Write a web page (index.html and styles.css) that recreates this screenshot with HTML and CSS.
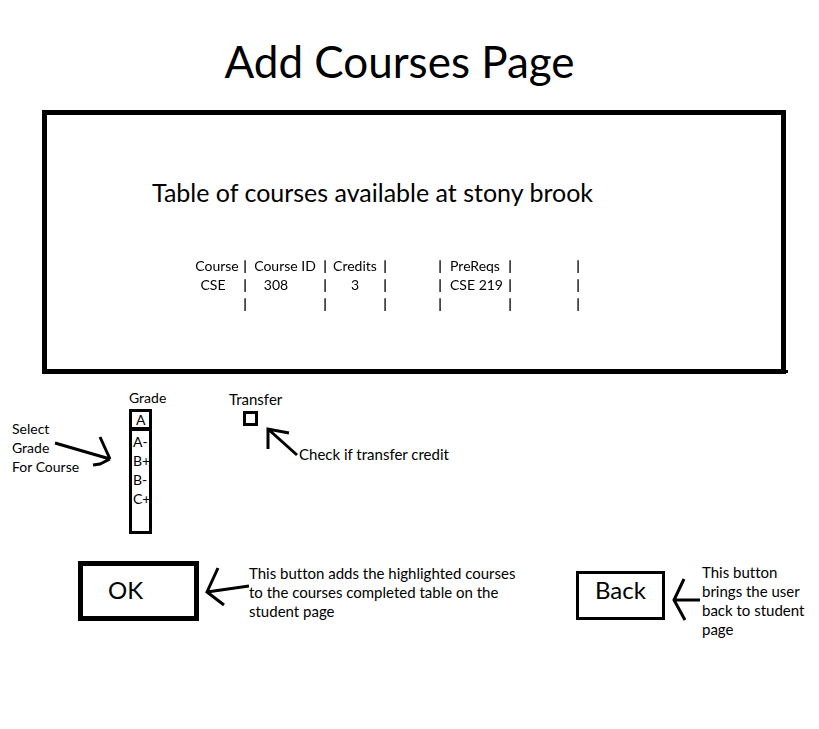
FILE: index.html
```html
<!DOCTYPE html>
<html lang="en">
<head>
<meta charset="utf-8">
<title>Add Courses Page</title>
<link rel="stylesheet" href="styles.css">
</head>
<body>
<main class="page">
  <h1 class="title">Add Courses Page</h1>

  <section class="panel">
    <h2 class="panel-title">Table of courses available at stony brook</h2>
    <table class="courses">
      <colgroup>
        <col class="c-course"><col class="c-bar"><col class="c-id"><col class="c-bar"><col class="c-credits"><col class="c-bar"><col class="c-gap"><col class="c-bar"><col class="c-prereq"><col class="c-bar"><col class="c-last"><col class="c-bar">
      </colgroup>
      <thead>
        <tr><th>Course</th><td>|</td><th>Course ID</th><td>|</td><th>Credits</th><td>|</td><td></td><td>|</td><th>PreReqs</th><td>|</td><td></td><td>|</td></tr>
      </thead>
      <tbody>
        <tr><td class="code">CSE</td><td>|</td><td class="id">308</td><td>|</td><td>3</td><td>|</td><td></td><td>|</td><td class="end">CSE 219</td><td>|</td><td></td><td>|</td></tr>
        <tr><td></td><td>|</td><td></td><td>|</td><td></td><td>|</td><td></td><td>|</td><td></td><td>|</td><td></td><td>|</td></tr>
      </tbody>
    </table>
  </section>

  <section class="options">
    <div class="grade-note">
      <p>Select<br>Grade<br>For Course</p>
      <svg class="grade-arrow" width="62" height="36" viewBox="0 0 62 36" aria-hidden="true"><path d="M3 9 58 25M48 3 58 25M41 31 48 30 58 25"/></svg>
    </div>
    <div class="grade">
      <label for="grade">Grade</label>
      <select id="grade" class="grade-value"><option>A</option></select>
      <select class="grade-list" size="5" aria-label="Other grades"><option>A-</option><option>B+</option><option>B-</option><option>C+</option></select>
    </div>
    <div class="transfer">
      <label for="transfer">Transfer</label>
      <input id="transfer" type="checkbox">
    </div>
    <div class="transfer-note">
      <svg width="33" height="32" viewBox="0 0 33 32" aria-hidden="true"><path d="M2 23V3L23 7M2 3 31 29"/></svg>
      <p>Check if transfer credit</p>
    </div>
  </section>

  <section class="actions">
    <button class="ok" type="button">OK</button>
    <svg class="ok-arrow" width="45" height="42" viewBox="0 0 45 42" aria-hidden="true"><path d="M14 3 3 27 20 40M3 27 45 21"/></svg>
    <p class="ok-note">This button adds the highlighted courses<br>to the courses completed table on the<br>student page</p>
    <button class="back" type="button">Back</button>
    <svg class="back-arrow" width="29" height="46" viewBox="0 0 29 46" aria-hidden="true"><path d="M13 3 3 24 14 44M3 24H29"/></svg>
    <p class="back-note">This button<br>brings the user<br>back to student<br>page</p>
  </section>
</main>
</body>
</html>
```
FILE: styles.css
```css
* { box-sizing: border-box; }
body {
  margin: 0;
  background: #fff;
  color: #000;
  font: 15px/19px Lato, "Open Sans", sans-serif;
  font-variant-ligatures: none;
}
h1, h2, p { margin: 0; font-weight: 400; }
select, button, input { margin: 0; font: inherit; color: inherit; }
svg { fill: none; stroke: #000; stroke-width: 3; flex: none; }

.page { padding: 35px 12px 0; }
.title {
  padding-right: 20px;
  font-size: 44px;
  line-height: 52px;
  text-align: center;
}

.panel {
  position: relative;
  margin: 23px 21px 0 30px;
  padding: 62px 0 56px 105px;
  border: 5px solid #000;
}
.panel::after {
  content: "";
  position: absolute;
  right: -7px;
  bottom: -4px;
  width: 4px;
  height: 3px;
  background: #000;
}
.panel-title { font-size: 25px; line-height: 30px; }
.courses {
  margin: 49px 0 0 41px;
  border-collapse: collapse;
  table-layout: fixed;
  width: 389px;
  font-size: 14px;
  will-change: transform;
}
.courses th, .courses td {
  height: 19px;
  padding: 0;
  font-weight: 400;
  text-align: center;
  white-space: nowrap;
}
.courses td:nth-child(even) { font-weight: 700; }
.courses .code { padding-right: 8px; }
.courses .id { padding-right: 18px; }
.courses .end { text-align: right; padding-right: 3px; }
.c-course { width: 48px; }
.c-bar { width: 8px; }
.c-id { width: 72px; }
.c-credits { width: 52px; }
.c-gap { width: 47px; }
.c-prereq { width: 62px; }
.c-last { width: 60px; }

.options { display: flex; align-items: flex-start; margin-top: 14px; }
.grade-note { position: relative; width: 117px; padding-top: 31px; font-size: 14px; }
.grade-arrow { position: absolute; left: 40px; top: 46px; }
.grade { display: flex; flex-direction: column; width: 100px; font-size: 14px; }
.grade label { margin-bottom: 2px; }
.grade-value, .grade-list {
  appearance: none;
  width: 23px;
  padding: 0;
  border: 3px solid #000;
  border-radius: 0;
  background: #fff;
  outline: 0;
}
.grade-value { height: 22px; padding-left: 4px; border-bottom-width: 4px; line-height: 15px; }
.grade-list { height: 103px; padding-top: 2px; border-top: 0; overflow: hidden; }
.grade-list option { min-height: 19px; padding: 0 0 0 1px; line-height: 19px; }
.transfer { display: flex; flex-direction: column; width: 37px; padding-top: 2px; white-space: nowrap; }
.transfer input {
  appearance: none;
  width: 15px;
  height: 15px;
  margin: 2px 0 0 14px;
  border: 3px solid #000;
}
.transfer-note { display: flex; align-items: flex-end; padding-top: 38px; }
.transfer-note p { margin-bottom: -6px; }

.actions { display: flex; align-items: flex-start; margin-top: 27px; padding-left: 66px; }
button { padding: 0; background: #fff; border-radius: 0; text-align: left; font-size: 24px; line-height: 30px; }
.ok { width: 121px; height: 60px; padding: 0 0 2px 25px; border: 5px solid #000; }
.ok-arrow { margin: 4px 0 0 5px; }
.ok-note { margin-top: 3px; white-space: nowrap; }
.back { width: 89px; height: 49px; margin: 10px 0 0 auto; padding: 0 0 12px 16px; border: 3px solid #000; }
.back-arrow { margin: 15px 2px 0 6px; }
.back-note { width: 105px; margin-top: 2px; white-space: nowrap; }
```
